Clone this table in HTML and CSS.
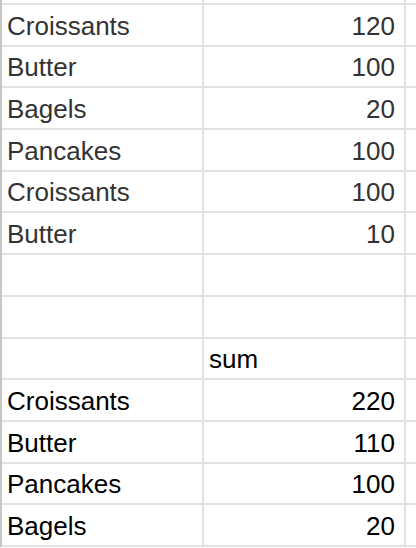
FILE: index.html
```html
<!DOCTYPE html>
<html>
<head>
<meta charset="utf-8">
<link rel="stylesheet" href="styles.css">
</head>
<body>
<div class="sheet">
  <div class="strip"></div><div class="strip"></div><div class="strip"></div>

  <div class="cell top">Croissants</div><div class="cell top num">120</div><div class="cell top"></div>
  <div class="cell top">Butter</div><div class="cell top num">100</div><div class="cell top"></div>
  <div class="cell top">Bagels</div><div class="cell top num">20</div><div class="cell top"></div>
  <div class="cell top">Pancakes</div><div class="cell top num">100</div><div class="cell top"></div>
  <div class="cell top">Croissants</div><div class="cell top num">100</div><div class="cell top"></div>
  <div class="cell top">Butter</div><div class="cell top num">10</div><div class="cell top"></div>

  <div class="cell"></div><div class="cell"></div><div class="cell"></div>
  <div class="cell"></div><div class="cell"></div><div class="cell"></div>

  <div class="cell"></div><div class="cell">sum</div><div class="cell"></div>
  <div class="cell">Croissants</div><div class="cell num">220</div><div class="cell"></div>
  <div class="cell">Butter</div><div class="cell num">110</div><div class="cell"></div>
  <div class="cell">Pancakes</div><div class="cell num">100</div><div class="cell"></div>
  <div class="cell">Bagels</div><div class="cell num">20</div><div class="cell"></div>
</div>
</body>
</html>
```
FILE: styles.css
```css
html, body {
  margin: 0;
  padding: 0;
  background: #fff;
}
body {
  width: 416px;
  height: 548px;
  overflow: hidden;
}
.sheet {
  display: grid;
  grid-template-columns: 202px 202px 1fr;
  grid-template-rows: 5px repeat(13, 41.7px);
  border-left: 2px solid #c6c6c6;
  font-family: "Liberation Sans", Arial, Helvetica, sans-serif;
  font-size: 26px;
  color: #000;
}
.strip,
.cell {
  box-sizing: border-box;
  border-right: 2px solid #e2e2e2;
  border-bottom: 2px solid #e2e2e2;
}
.strip:nth-child(3n),
.cell:nth-child(3n) {
  border-right: none;
}
.cell {
  display: flex;
  align-items: flex-end;
  padding: 0 9px 4px 5px;
  white-space: nowrap;
  line-height: 30px;
}
.num {
  justify-content: flex-end;
}
.top {
  color: #333;
}
```
